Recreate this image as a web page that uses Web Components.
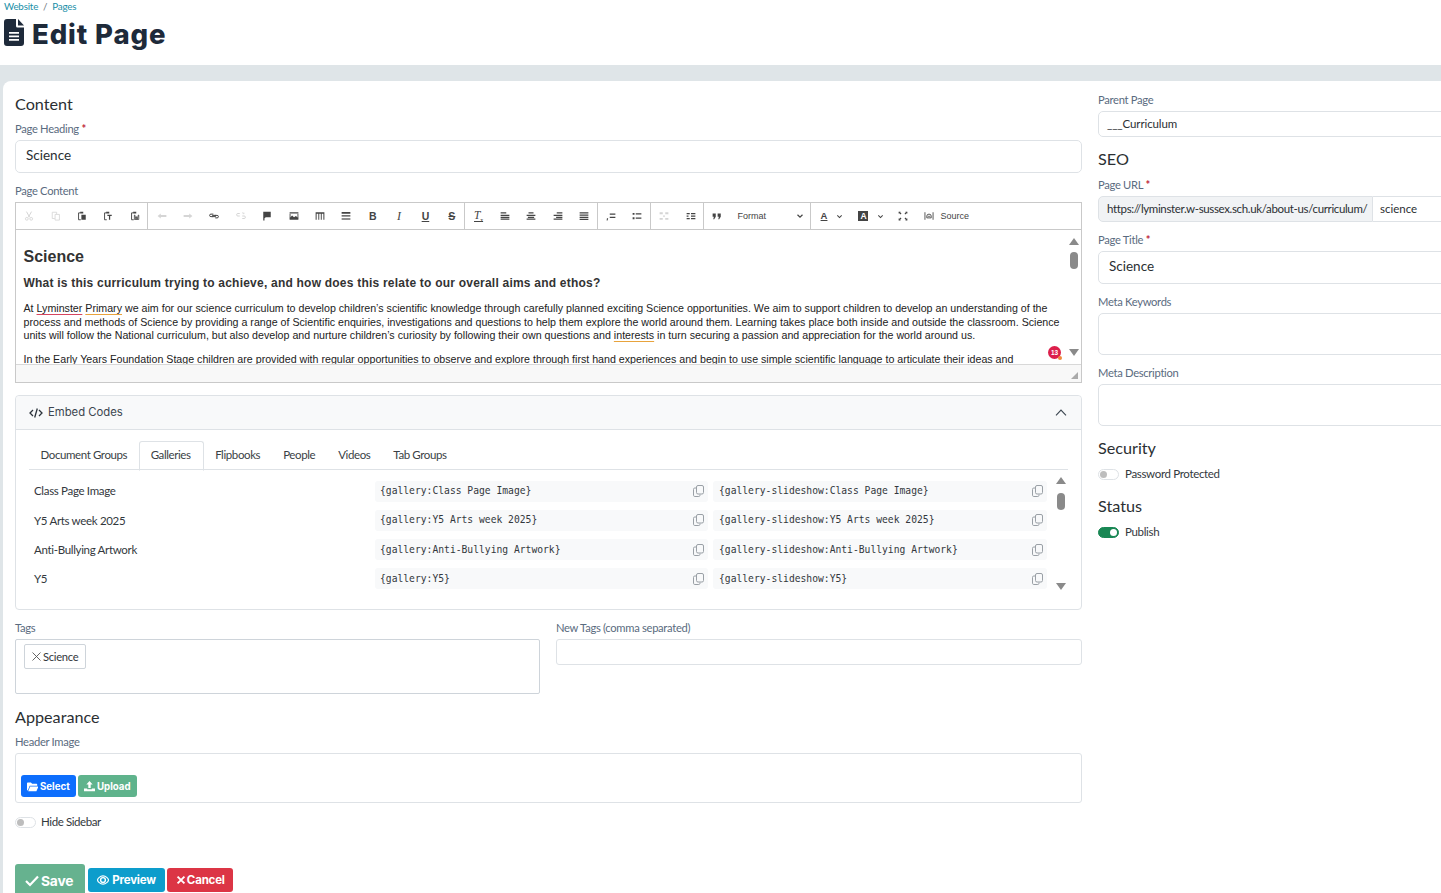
<!DOCTYPE html>
<html lang="en">
<head>
<meta charset="utf-8">
<title>Edit Page</title>
<style>
  html, body { margin: 0; height: 893px; overflow: hidden; background: #fff; }
  body { font-family: Lato, "Liberation Sans", sans-serif; color: #212529; }
</style>
</head>
<body>
<page-header></page-header>
<page-shell>
  <div slot="main">
    <section-title top="13">Content</section-title>
    <form-field label="Page Heading" required><text-box big>Science</text-box></form-field>
    <form-field label="Page Content"><rich-editor></rich-editor></form-field>
    <embed-codes></embed-codes>
    <tag-row></tag-row>
    <section-title top="13">Appearance</section-title>
    <form-field label="Header Image"><image-picker></image-picker></form-field>
    <toggle-switch label="Hide Sidebar" style="margin-top:-1px;gap:5px;letter-spacing:-.4px"></toggle-switch>
    <action-bar></action-bar>
  </div>
  <div slot="side">
    <form-field label="Parent Page"><text-box>___Curriculum</text-box></form-field>
    <section-title top="1" bottom="9">SEO</section-title>
    <form-field label="Page URL" required><url-group></url-group></form-field>
    <form-field label="Page Title" required><text-box big>Science</text-box></form-field>
    <form-field label="Meta Keywords"><text-box area="42"></text-box></form-field>
    <form-field label="Meta Description"><text-box area="42"></text-box></form-field>
    <section-title top="1" bottom="7">Security</section-title>
    <toggle-switch label="Password Protected"></toggle-switch>
    <section-title top="13" bottom="7">Status</section-title>
    <toggle-switch label="Publish" on></toggle-switch>
  </div>
</page-shell>

<script>
const ICONS = {
  cut: '<path d="M4 1l5 9M12 1L7 10" fill="none" stroke="currentColor" stroke-width="1.6"/><circle cx="4.5" cy="12.5" r="2.2" fill="none" stroke="currentColor" stroke-width="1.4"/><circle cx="11.5" cy="12.5" r="2.2" fill="none" stroke="currentColor" stroke-width="1.4"/>',
  copy: '<path d="M2 2h7v3M2 2v10h4M6.5 5.5h7v9h-7z" fill="none" stroke="currentColor" stroke-width="1.3"/>',
  paste: '<path d="M5 3H2.5v11H6" fill="none" stroke="currentColor" stroke-width="1.5"/><path d="M5 1h5v3H5zM7 6h7v8H7z"/>',
  pastetext: '<path d="M5 3H2.5v11H6" fill="none" stroke="currentColor" stroke-width="1.5"/><path d="M5 1h5v3H5zM7 6h7v2H11.5v6h-2V8H7z"/>',
  pasteword: '<path d="M5 3H2.5v11H6" fill="none" stroke="currentColor" stroke-width="1.5"/><path d="M5 1h5v3H5z"/><path d="M7 6.5v7h7v-7M7.5 6l2 7 1-4 1 4 2-7" fill="none" stroke="currentColor" stroke-width="1.3"/>',
  undo: '<path d="M1 8l5-4v2.5h9v3H6V12z"/>',
  redo: '<path d="M15 8l-5-4v2.5H1v3h9V12z"/>',
  link: '<path d="M7 5H3a2 2 0 0 0 0 4h3M9 7h4a2 2 0 0 1 0 4h-3M5 7h6M5 9h6" fill="none" stroke="currentColor" stroke-width="1.6"/>',
  unlink: '<path d="M6 4H3a2 2 0 0 0 0 4h3M10 8h3a2 2 0 0 1 0 4h-3M11 2v2M13 3l-1 2" fill="none" stroke="currentColor" stroke-width="1.6"/>',
  anchor: '<path d="M2 1h12v9H6l-2 1.5V15H2z"/>',
  image: '<path d="M1 2h14v2H1z"/><path d="M1 14v-3l4-4 3 3 3-2 4 3v3z"/><path d="M1 4.5h1.4v7H1zM13.6 4.5H15v7h-1.400z"/>',
  table: '<path d="M1 2h14v2.500H1zM1 4.500h1.600V14H1zM5.300 4.500h1.500V14H5.300zM9.300 4.500h1.500V14H9.300zM13.400 4.500H15V14h-1.600z"/>',
  hr: '<path d="M1 1.500h14v3H1zM1 6.900h14v2H1z"/><path d="M1 11.300h14v3H1z" opacity=".6"/>',
  left: '<path d="M1 2h9v2H1zM1 6h14v2H1zM1 9h14v2H1zM1 12h14v2H1z"/>',
  center: '<path d="M4 2h8v2H4zM1 6h14v2H1zM3 9h10v2H3zM1 12h14v2H1z"/>',
  right: '<path d="M6 2h9v2H6zM1 6h14v2H1zM5 9h10v2H5zM1 12h14v2H1z"/>',
  justify: '<path d="M1 2h14v2H1zM1 5.500h14v2H1zM1 9h14v2H1zM1 12.500h14v2H1z"/>',
  ol: '<path d="M6 4h9v2H6zM6 9h9v2H6zM1.500 11.500h2l-1 3.500h-1.500z"/>',
  ul: '<path d="M1 3h3v3H1zM1 10h3v3H1zM6 3.500h9v2H6zM6 10.500h9v2H6z"/>',
  outdent: '<path d="M1 2h5v3H1zM10 2h5v3h-5zM6.500 7h3v2h-3zM1 11h5v3H1zM10 11h5v3h-5z"/>',
  indent: '<path d="M1 3h5v2H1zM1 11h5v2H1zM8 3h7v2H8zM1 7h3v2H1zM8 7h7v2H8zM8 11h7v2H8z"/>',
  quote: '<path d="M1 4h5v5l-2.500 4H2l1-4H1zM9 4h5v5l-2.500 4H10l1-4H9z"/>',
  max: '<path d="M2 2l3 3M14 2l-3 3M2 14l3-3M14 14l-3-3" fill="none" stroke="currentColor" stroke-width="1.700"/><path d="M1 1h3v1.500H2.500V4H1zM15 1v3h-1.500V2.500H12V1zM1 15v-3h1.500v1.500H4V15zM15 15h-3v-1.500h1.500V12H15z"/>',
  source: '<path d="M1.500 2v12M14.500 2v12" fill="none" stroke="currentColor" stroke-width="1.400"/><path d="M4.500 8a3.500 3 0 0 1 7 0v3h-7z" fill="none" stroke="currentColor" stroke-width="1.400"/><path d="M6 8.500h4" stroke="currentColor" stroke-width="1.200"/>',
  chev: '<path d="M3 5.500l5 5 5-5" fill="none" stroke="currentColor" stroke-width="2.400"/>'
};

function svg(name, size) {
  return `<svg width="${size}" height="${size}" viewBox="0 0 16 16" fill="currentColor" aria-hidden="true">${ICONS[name]}</svg>`;
}

class PageHeader extends HTMLElement {
  connectedCallback() {
    this.attachShadow({ mode: 'open' });
    this.shadowRoot.innerHTML = `
      <style>
        :host { display: block; height: 65px; background: #fff; box-sizing: border-box; padding-left: 4px; }
        .crumbs { font-size: 9.800px; line-height: 13px; color: #1a8fa8; letter-spacing: -.2px; }
        .crumbs i { font-style: normal; color: #6c757d; margin: 0 5px; }
        h1 { margin: 0; display: flex; align-items: center; gap: 8px; height: 34px; margin-top: 4px;
             font: 800 27.500px/34px Inter, sans-serif; color: #1e2a3a; letter-spacing: .9px; }
        svg { display: block; margin-top: -3px; }
      </style>
      <div class="crumbs">Website<i>/</i>Pages</div>
      <h1>
        <svg width="20" height="27" viewBox="0 0 20 27"><path fill="#1e2a3a" d="M3 0h9v7a1.500 1.500 0 0 0 1.500 1.500H20V24a3 3 0 0 1-3 3H3a3 3 0 0 1-3-3V3a3 3 0 0 1 3-3z"/><path fill="#1e2a3a" d="M14 0l6 6.500h-6z"/><path fill="#fff" d="M5 13h10v1.800H5zM5 16.500h10v1.800H5zM5 20h10v1.800H5z"/></svg>
        Edit Page
      </h1>`;
  }
}
customElements.define('page-header', PageHeader);

class PageShell extends HTMLElement {
  connectedCallback() {
    this.attachShadow({ mode: 'open' });
    this.shadowRoot.innerHTML = `
      <style>
        :host { display: block; background: #dfe5e8; padding: 16px 0 0 3px; height: 828px; box-sizing: border-box; }
        .card { background: #fff; border-radius: 8px 0 0 0; height: 812px; overflow: hidden;
                box-sizing: border-box; padding: 0 0 0 12px; display: grid; grid-template-columns: 1067px 420px; column-gap: 16px; }
      </style>
      <div class="card"><div><slot name="main"></slot></div><div style="padding-top:12px"><slot name="side"></slot></div></div>`;
  }
}
customElements.define('page-shell', PageShell);

class SectionTitle extends HTMLElement {
  connectedCallback() {
    this.attachShadow({ mode: 'open' });
    const top = this.getAttribute('top') || 13;
    const bottom = this.getAttribute('bottom') || 8;
    this.shadowRoot.innerHTML = `
      <style>
        :host { display: block; padding: ${top}px 0 ${bottom}px; font: 400 16.200px/20px Lato, sans-serif; color: #2b2f33; }
      </style><slot></slot>`;
  }
}
customElements.define('section-title', SectionTitle);

class FormField extends HTMLElement {
  connectedCallback() {
    this.attachShadow({ mode: 'open' });
    const star = this.hasAttribute('required') ? ' <b>*</b>' : '';
    this.shadowRoot.innerHTML = `
      <style>
        :host { display: block; margin-bottom: 11px; }
        label { display: block; height: 14px; margin-bottom: 4px; font: 400 11.200px/14px Lato, sans-serif; color: #5a6b80; letter-spacing: -.3px; }
        b { color: #c0263a; font-weight: 700; }
      </style>
      <label>${this.getAttribute('label')}${star}</label><slot></slot>`;
  }
}
customElements.define('form-field', FormField);

class TextBox extends HTMLElement {
  connectedCallback() {
    this.attachShadow({ mode: 'open' });
    const big = this.hasAttribute('big');
    const area = this.getAttribute('area');
    const h = area ? area + 'px' : big ? '33px' : '26px';
    this.shadowRoot.innerHTML = `
      <style>
        :host { display: flex; align-items: center; box-sizing: border-box; height: ${h}; border: 1px solid #dee2e6;
                border-radius: 5px; background: #fff; padding: 0 ${big ? 10 : 8}px ${big ? 2 : 0}px; color: #2b2f33;
                font: 400 ${big ? 13.500 : 11.500}px/1 Lato, sans-serif; ${big ? '' : 'letter-spacing:-.1px;'} }
      </style><slot></slot>`;
  }
}
customElements.define('text-box', TextBox);

class UrlGroup extends HTMLElement {
  connectedCallback() {
    this.attachShadow({ mode: 'open' });
    this.shadowRoot.innerHTML = `
      <style>
        :host { display: flex; height: 26px; font: 400 11.500px/23px Lato, sans-serif; color: #2b2f33; }
        .pre { width: 275px; box-sizing: border-box; background: #f1f3f5; border: 1px solid #dee2e6; border-radius: 5px 0 0 5px; padding-left: 8px; letter-spacing: -.35px; white-space: nowrap; overflow: hidden; }
        .val { flex: 1; border: 1px solid #dee2e6; border-left: 0; padding-left: 7px; }
      </style>
      <div class="pre">https://lyminster.w-sussex.sch.uk/about-us/curriculum/</div><div class="val">science</div>`;
  }
}
customElements.define('url-group', UrlGroup);

const TOOLBAR = [
  [['cut', 1], ['copy', 1], ['paste'], ['pastetext'], ['pasteword']],
  [['undo', 1], ['redo', 1], ['link'], ['unlink', 1], ['anchor'], ['image'], ['table'], ['hr'],
   ['@B', 0, 'font-weight:700;font-family:Liberation Sans'], ['@I', 0, 'font-style:italic;font-family:Liberation Serif;font-size:12px'], ['@U', 0, 'text-decoration:underline;font-family:Liberation Sans;font-weight:700'], ['@S', 0, 'text-decoration:line-through;font-family:Liberation Sans;font-weight:700']],
  [['@T<sub style="font-size:6px;line-height:0;font-style:normal">x</sub>', 0, 'font-style:italic;font-family:Liberation Serif;font-size:11.500px;border-bottom:1px solid #444;line-height:10px'], ['left'], ['center'], ['right'], ['justify']],
  [['ol'], ['ul']],
  [['outdent', 1], ['indent']]
];

class RichEditor extends HTMLElement {
  connectedCallback() {
    this.attachShadow({ mode: 'open' });
    const btn = ([name, off, css]) => {
      const inner = name[0] === '@' ? `<span style="${css}">${name.slice(1)}</span>` : svg(name, 10);
      return `<span class="btn${off ? ' off' : ''}">${inner}</span>`;
    };
    const groups = TOOLBAR.map(g => `<div class="grp">${g.map(btn).join('')}</div>`).join('');
    this.shadowRoot.innerHTML = `
      <style>
        :host { display: block; height: 181px; box-sizing: border-box; border: 1px solid #c9c9c9; margin-bottom: 12px; position: relative; background: #fff; }
        .bar { display: flex; height: 26px; border-bottom: 1px solid #c9c9c9; color: #444; font: 400 9px/26px "Liberation Sans", sans-serif; box-sizing: content-box; }
        .grp { display: flex; border-right: 1px solid #c9c9c9; }
        .grp:last-child { border: 0; }
        .btn { width: 26.400px; display: flex; align-items: center; justify-content: center; font-size: 10.500px; }
        .btn.off { opacity: .22; }
        .grp > .btn:last-child { margin-right: -.6px; }
        .combo { width: 79px; display: flex; align-items: center; justify-content: space-between; padding: 0 6px 0 7px; box-sizing: border-box; }
        .pick { display: flex; align-items: center; gap: 9px; padding-left: 10px; }
        .pick span { display: inline-block; font: 700 9.500px/10px "Liberation Sans", sans-serif; }
        .a { text-decoration: underline; }
        .bgc { width: 10px; height: 10px; background: #444; color: #fff; text-align: center; font-size: 8.500px !important; line-height: 10px !important; }
        .pad { padding: 0 0 0 10px; display: flex; align-items: center; gap: 5px; }
        .body { height: 134px; overflow: hidden; padding: 0 18px 0 7.500px; font: 400 10.660px/13.500px "Liberation Sans", sans-serif; color: #222; box-sizing: border-box; }
        h1 { font: 700 16px/20px "Liberation Sans", sans-serif; margin: 17px 0 0; color: #333; }
        h2 { font: 700 12px/16px "Liberation Sans", sans-serif; margin: 8px 0 11px; letter-spacing: .22px; color: #333; }
        p { margin: 0 0 10.500px; }
        .red { text-decoration: underline; text-decoration-color: #d6455f; text-underline-offset: 2px; }
        .org { text-decoration: underline; text-decoration-color: #e8a33d; text-underline-offset: 2px; }
        .foot { height: 18px; background: #f8f8f8; border-top: 1px solid #d8d8d8; box-sizing: border-box; position: relative; }
        .foot svg { position: absolute; right: 3px; bottom: 3px; }
        .track { position: absolute; left: 1053px; top: 35px; width: 10px; height: 118px; }
        .badge { position: absolute; left: 1032px; top: 143px; width: 13px; height: 13px; border-radius: 50%; background: #dc1f4b; color: #fff; font: 700 6.500px/13px "Liberation Sans", sans-serif; text-align: center; }
        .badge::after { content: ''; position: absolute; right: -1px; bottom: -1px; width: 4px; height: 4px; border-radius: 50%; background: #f08a3c; }
      </style>
      <div class="bar">
        ${groups}
        <div class="grp"><span class="btn">${svg('quote', 10)}</span><span class="combo"><span>Format</span>${svg('chev', 8)}</span></div>
        <span class="pick"><span class="a">A</span>${svg('chev', 7)}</span>
        <span class="pick" style="padding-left:15px"><span class="bgc">A</span>${svg('chev', 7)}</span>
        <span class="pad" style="padding-left:14px">${svg('max', 10)}</span>
        <span class="pad" style="padding-left:16px">${svg('source', 10)}<span style="margin-left:1px">Source</span></span>
      </div>
      <div class="body">
        <h1>Science</h1>
        <h2>What is this curriculum trying to achieve, and how does this relate to our overall aims and ethos?</h2>
        <p>At <span class="red">Lyminster</span> <span class="org">Primary</span> we aim for our science curriculum to develop children’s scientific knowledge through carefully planned exciting Science opportunities. We aim to support children to develop an understanding of the process and methods of Science by providing a range of Scientific enquiries, investigations and questions to help them explore the world around them. Learning takes place both inside and outside the classroom. Science units will follow the National curriculum, but also develop and nurture children’s curiosity by following their own questions and <span class="org">interests</span> in turn securing a passion and appreciation for the world around us.</p>
        <p>In the Early Years Foundation Stage children are provided with regular opportunities to observe and explore through first hand experiences and begin to use simple scientific language to articulate their ideas and understanding of the world around them.</p>
      </div>
      <div class="foot"><svg width="7" height="7" viewBox="0 0 7 7"><path fill="#aaa" d="M7 0v7H0z"/></svg></div>
      <mini-scroll class="track" thumb="17" offset="14"></mini-scroll>
      <div class="badge">13</div>`;
  }
}
customElements.define('rich-editor', RichEditor);

class MiniScroll extends HTMLElement {
  connectedCallback() {
    this.attachShadow({ mode: 'open' });
    const thumb = this.getAttribute('thumb'), offset = this.getAttribute('offset');
    this.shadowRoot.innerHTML = `
      <style>
        :host { display: block; }
        .wrap { position: relative; height: 100%; width: 10px; }
        .up, .down { position: absolute; left: 0; width: 0; height: 0; border-left: 5px solid transparent; border-right: 5px solid transparent; }
        .up { top: 0; border-bottom: 7px solid #8a8a8a; }
        .down { bottom: 0; border-top: 7px solid #8a8a8a; }
        .thumb { position: absolute; left: 1px; top: ${offset}px; width: 8px; height: ${thumb}px; border-radius: 4px; background: #8a8a8a; }
      </style>
      <div class="wrap"><div class="up"></div><div class="thumb"></div><div class="down"></div></div>`;
  }
}
customElements.define('mini-scroll', MiniScroll);

const GALLERIES = ['Class Page Image', 'Y5 Arts week 2025', 'Anti-Bullying Artwork', 'Y5'];
const COPY = '<svg width="11" height="12" viewBox="0 0 11 12" fill="none" stroke="#9aa0a6" stroke-width="1"><rect x="3.500" y=".5" width="7" height="8.500" rx="1.500"/><path d="M3 3H1.800A1.300 1.300 0 0 0 .5 4.300v6A1.300 1.300 0 0 0 1.800 11.500h4A1.300 1.300 0 0 0 7 10.300V9.500"/></svg>';

class EmbedCodes extends HTMLElement {
  connectedCallback() {
    this.attachShadow({ mode: 'open' });
    const tabs = ['Document Groups', 'Galleries', 'Flipbooks', 'People', 'Videos', 'Tab Groups'];
    const rows = GALLERIES.map(g => `
      <div class="row">
        <div class="name">${g}</div>
        <div class="code"><span>{gallery:${g}}</span>${COPY}</div>
        <div class="code"><span>{gallery-slideshow:${g}}</span>${COPY}</div>
      </div>`).join('');
    this.shadowRoot.innerHTML = `
      <style>
        :host { display: block; height: 215px; box-sizing: border-box; border: 1px solid #dee2e6; border-radius: 4px; position: relative; margin-bottom: 11px; }
        .head { height: 34px; box-sizing: border-box; background: #f8f9fa; border-bottom: 1px solid #dee2e6; border-radius: 4px 4px 0 0;
                display: flex; align-items: center; padding: 0 14px 0 13px; gap: 5px; font: 400 11.300px/1 Inter, sans-serif; color: #3c4650; }
        .head .sp { flex: 1; }
        nav { display: flex; margin: 11px 13px 0; height: 28px; border-bottom: 1px solid #dee2e6; font: 400 11.500px/28px Lato, sans-serif; letter-spacing: -.4px; color: #3a3f45; }
        nav span { padding: 0 11.500px; }
        nav .on { border: 1px solid #dee2e6; border-bottom: 1px solid #fff; border-radius: 3px 3px 0 0; height: 28px; line-height: 26px; padding: 0 12px 0 11px; }
        .rows { padding: 6.400px 0 0 18px; }
        .row { display: grid; grid-template-columns: 336px 333px 334px; column-gap: 5px; align-items: center; height: 29.300px; font: 400 11.500px/1 Lato, sans-serif; letter-spacing: -.32px; color: #33383d; }
        .code { height: 21px; background: #f8f9fa; border-radius: 3px; display: flex; align-items: center; justify-content: space-between; padding: 0 4px 0 5px; font: 400 9.680px/1 "DejaVu Sans Mono", monospace; letter-spacing: 0; }
        .code + .code { padding-left: 6px; }
        .bar { position: absolute; left: 1040px; top: 81px; height: 113px; width: 10px; }
      </style>
      <div class="head">
        <svg width="14" height="12" viewBox="0 0 14 12" fill="none" stroke="#2b333b" stroke-width="1.300"><path d="M4 3L1 6l3 3M10 3l3 3-3 3M8.300 1.500L5.700 10.500"/></svg>
        Embed Codes<span class="sp"></span>
        <svg width="12" height="7" viewBox="0 0 12 7" fill="none" stroke="#3c4650" stroke-width="1.100"><path d="M1 6.300L6 1l5 5.300"/></svg>
      </div>
      <nav>${tabs.map(t => `<span${t === 'Galleries' ? ' class="on"' : ''}>${t}</span>`).join('')}</nav>
      <div class="rows">${rows}</div>
      <mini-scroll class="bar" thumb="17" offset="16"></mini-scroll>`;
  }
}
customElements.define('embed-codes', EmbedCodes);

class TagRow extends HTMLElement {
  connectedCallback() {
    this.attachShadow({ mode: 'open' });
    this.shadowRoot.innerHTML = `
      <style>
        :host { display: grid; grid-template-columns: 525px 526px; column-gap: 16px; font: 400 11.200px/14px Lato, sans-serif; }
        label { display: block; height: 14px; margin-bottom: 4px; color: #5a6b80; letter-spacing: -.3px; }
        .tags { height: 55px; box-sizing: border-box; border: 1px solid #ced4da; border-radius: 2px; padding: 4px 8px; }
        .tag { display: inline-flex; align-items: center; gap: 2px; height: 25px; box-sizing: border-box; padding: 0 7px; border: 1px solid #ced4da; border-radius: 2px; color: #33383d; letter-spacing: -.3px; }
        .new { height: 26px; box-sizing: border-box; border: 1px solid #dee2e6; border-radius: 3px; }
      </style>
      <div><label>Tags</label><div class="tags"><span class="tag"><svg width="9" height="9" viewBox="0 0 9 9" stroke="#555" stroke-width=".9"><path d="M.5.5l8 8M8.500.5l-8 8"/></svg>Science</span></div></div>
      <div><label>New Tags (comma separated)</label><div class="new"></div></div>`;
  }
}
customElements.define('tag-row', TagRow);

class ImagePicker extends HTMLElement {
  connectedCallback() {
    this.attachShadow({ mode: 'open' });
    this.shadowRoot.innerHTML = `
      <style>
        :host { display: flex; align-items: flex-end; gap: 2px; height: 50px; box-sizing: border-box; border: 1px solid #dee2e6; border-radius: 3px; padding: 0 0 5px 5px; margin-bottom: -1px; }
      </style>
      <solid-button color="#0d6efd" icon="folder" small style="width:55px">Select</solid-button>
      <solid-button color="#5fb38c" icon="upload" small style="width:59px">Upload</solid-button>`;
  }
}
customElements.define('image-picker', ImagePicker);

const BTN_ICONS = {
  folder: '<path d="M0 3a1 1 0 0 1 1-1h4l1.500 1.500H12a1 1 0 0 1 1 1V6H3.500L1 12H1a1 1 0 0 1-1-1z"/><path d="M4 7h10.500L12 13H1.500z"/>',
  upload: '<path d="M7 0L3 4.500h2.500V9h3V4.500H11z"/><path d="M0 9.500h4v1h6v-1h4V13H0z"/>',
  check: '<path d="M1 7l4 4 8-8.500" fill="none" stroke="currentColor" stroke-width="2.200"/>',
  eye: '<path d="M7 2.300C3.500 2.300 1 5 .6 7c.4 2 2.900 4.700 6.400 4.700s6-2.700 6.400-4.700C13 5 10.500 2.300 7 2.300z" fill="none" stroke="currentColor" stroke-width="1.400"/><circle cx="7" cy="7" r="2.800" fill="none" stroke="currentColor" stroke-width="1.600"/>',
  x: '<path d="M3 3l8 8M11 3l-8 8" fill="none" stroke="currentColor" stroke-width="2.200"/>'
};

class SolidButton extends HTMLElement {
  connectedCallback() {
    this.attachShadow({ mode: 'open' });
    const size = this.hasAttribute('large') ? 'height:34px;font-size:13.800px;padding:0 12px 0 10px;gap:2px;border-radius:4px;'
      : this.hasAttribute('small') ? 'height:22px;font-size:9.700px;padding:0 6px;gap:2px;letter-spacing:0;'
      : 'height:24px;font-size:11.500px;padding:0 9px 0 9px;gap:3px;';
    const ic = this.hasAttribute('large') ? 14 : this.hasAttribute('small') ? 11 : 12;
    this.shadowRoot.innerHTML = `
      <style>
        :host { display: inline-flex; align-items: center; box-sizing: border-box; letter-spacing: -.2px; ${size} background: ${this.getAttribute('color')};
                color: #fff; font-family: Inter, sans-serif; font-weight: 700; border-radius: 3px; }
      </style>
      <svg width="${ic}" height="${ic}" viewBox="0 0 14 14" fill="currentColor">${BTN_ICONS[this.getAttribute('icon')]}</svg><slot></slot>`;
  }
}
customElements.define('solid-button', SolidButton);

class ToggleSwitch extends HTMLElement {
  connectedCallback() {
    this.attachShadow({ mode: 'open' });
    const on = this.hasAttribute('on');
    this.shadowRoot.innerHTML = `
      <style>
        :host { display: flex; align-items: center; gap: 6px; height: 18px; font: 400 11.500px/18px Lato, sans-serif; color: #33383d; letter-spacing: -.33px; }
        .sw { width: 21px; height: 11px; box-sizing: border-box; border-radius: 6px; border: 1px solid ${on ? '#198754' : '#dee2e6'}; background: ${on ? '#198754' : '#fff'}; display: flex; align-items: center; padding: 0 1px; justify-content: ${on ? 'flex-end' : 'flex-start'}; }
        .sw i { width: 7px; height: 7px; border-radius: 50%; background: ${on ? '#fff' : '#bdbdbd'}; display: block; }
      </style>
      <span class="sw"><i></i></span><span>${this.getAttribute('label')}</span>`;
  }
}
customElements.define('toggle-switch', ToggleSwitch);

class ActionBar extends HTMLElement {
  connectedCallback() {
    this.attachShadow({ mode: 'open' });
    this.shadowRoot.innerHTML = `
      <style>
        :host { display: flex; align-items: flex-start; gap: 3px; margin-top: 33px; }
        solid-button + solid-button { margin-top: 4px; }
      </style>
      <solid-button color="#66b28f" icon="check" large>Save</solid-button>
      <solid-button color="#0d9dcc" icon="eye">Preview</solid-button>
      <solid-button color="#dc3545" icon="x" style="margin-left:-1px;padding:0 8px;gap:0">Cancel</solid-button>`;
  }
}
customElements.define('action-bar', ActionBar);
</script>
</body>
</html>
